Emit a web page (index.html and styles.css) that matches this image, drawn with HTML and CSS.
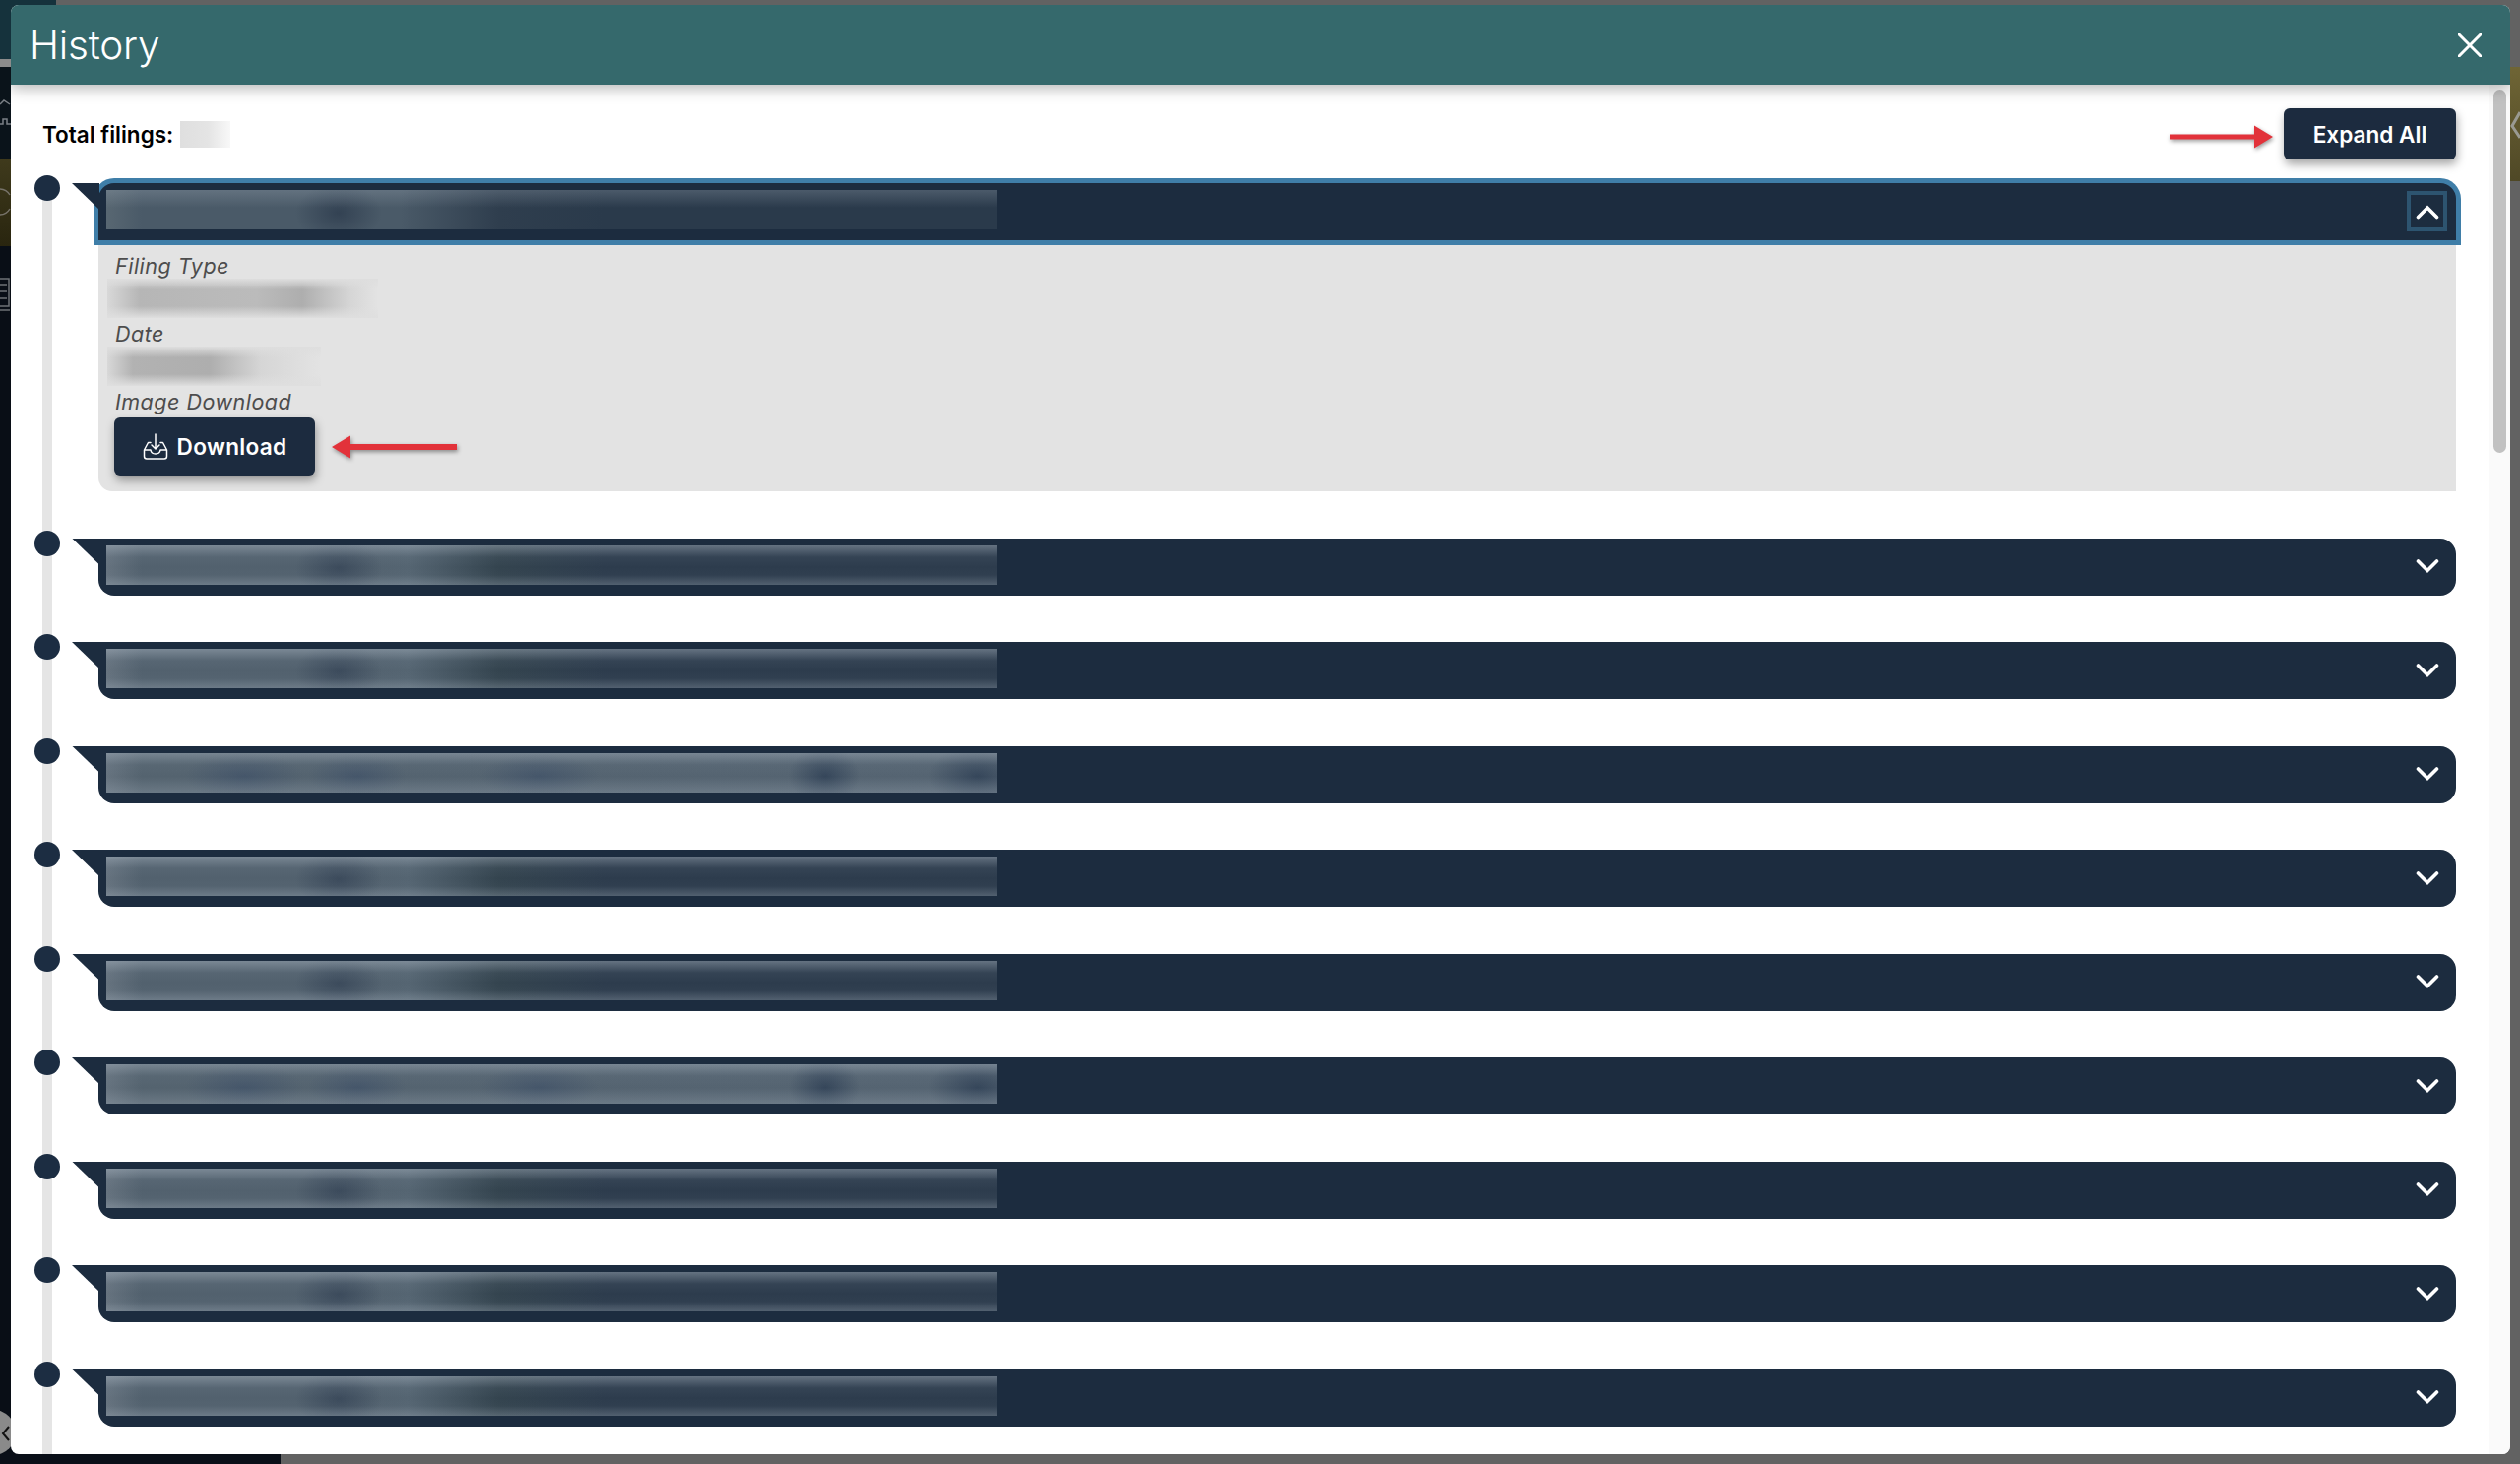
FILE: index.html
```html
<!DOCTYPE html>
<html lang="en">
<head>
<meta charset="utf-8">
<title>History</title>
<link rel="stylesheet" href="styles.css">
</head>
<body>
<div class="backdrop" aria-hidden="true">
  <div class="band band--teal"></div>
  <div class="band band--grey"></div>
  <div class="band band--ink"></div>
  <div class="band band--olive"></div>
  <div class="band band--ink2"></div>
  <div class="bottom-strip"></div>
  <div class="back-circle"></div>
  <div class="right-olive"></div>
  <svg class="deco" viewBox="0 0 2560 1487" width="2560" height="1487" fill="none">
    <path d="M0 106L4 102L10 106M0 126H3V121H7V126H11" stroke="#7b8086" stroke-width="1.500"/>
    <path d="M0 192A12 12 0 0 1 10 198M10 212A12 12 0 0 1 0 218" stroke="#77736a" stroke-width="1.500"/>
    <path d="M0 283H9V311H0M0 289H7M0 296H7M0 303H7M0 315H10" stroke="#6d7176" stroke-width="1.500"/>
    <path d="M2560 114L2552 128L2560 140" stroke="#9a9a92" stroke-width="3"/>
    <path d="M9 1449L3 1456L9 1463" stroke="#111" stroke-width="2"/>
  </svg>
</div>
<main class="modal">
  <header class="modal-head">
    <h1 class="modal-title">History</h1>
    <svg class="close" viewBox="0 0 24 24" width="24" height="24"><path d="M1 1L23 23M23 1L1 23" stroke="#fff" stroke-width="3" stroke-linecap="round" fill="none"/></svg>
  </header>
  <div class="modal-body">
    <div class="content">
      <div class="toolbar">
        <div class="total"><span>Total filings:</span><span class="total-blur"></span></div>
        <div class="toolbar-right">
          <svg class="arrow arrow--right" viewBox="0 0 106 26" width="106" height="26"><path d="M0 10.500H86V1.500L105 13L86 24.500V15.500H0Z" fill="#e2323a"/></svg>
          <button class="btn btn--expand">Expand All</button>
        </div>
      </div>
      <div class="timeline">
        <section class="item">
          <span class="dot"></span>
          <div class="row row--open">
            <div class="redact redact--open"></div>
            <span class="toggle toggle--open"><svg viewBox="0 0 24 16" width="24" height="16"><path d="M2.500 13.500L12 4L21.500 13.500" stroke="#fff" stroke-width="3.600" fill="none" stroke-linecap="round"/></svg></span>
          </div>
          <div class="panel">
            <div class="field">
              <div class="label">Filing Type</div>
              <div class="value value--type"></div>
            </div>
            <div class="field">
              <div class="label">Date</div>
              <div class="value value--date"></div>
            </div>
            <div class="field">
              <div class="label">Image Download</div>
              <div class="download-line">
                <button class="btn btn--download">
                  <svg viewBox="0 0 26 27" width="26" height="27"><path d="M8 9.500H5.500L1.500 17V23.500Q1.500 26 4 26H22Q24.500 26 24.500 23.500V17L20.500 9.500H18M1.500 17H8Q8.500 21 13 21Q17.500 21 18 17H24.500M13 1V15.500M9 12L13 16L17 12" stroke="#fff" stroke-width="1.500" fill="none" stroke-linecap="round" stroke-linejoin="round"/></svg>
                  <span>Download</span>
                </button>
                <svg class="arrow" viewBox="0 0 128 26" width="128" height="26"><path d="M128 10H20V1.500L1 13L20 24.500V16H128Z" fill="#e2323a"/></svg>
              </div>
            </div>
          </div>
        </section>
        <section class="item"><span class="dot"></span><div class="row"><div class="redact redact--a"></div><span class="toggle"><svg viewBox="0 0 24 16" width="24" height="16"><path d="M2.500 3L12 12.500L21.500 3" stroke="#fff" stroke-width="3.600" fill="none" stroke-linecap="round"/></svg></span></div></section>
        <section class="item"><span class="dot"></span><div class="row"><div class="redact redact--a"></div><span class="toggle"><svg viewBox="0 0 24 16" width="24" height="16"><path d="M2.500 3L12 12.500L21.500 3" stroke="#fff" stroke-width="3.600" fill="none" stroke-linecap="round"/></svg></span></div></section>
        <section class="item"><span class="dot"></span><div class="row"><div class="redact redact--b"></div><span class="toggle"><svg viewBox="0 0 24 16" width="24" height="16"><path d="M2.500 3L12 12.500L21.500 3" stroke="#fff" stroke-width="3.600" fill="none" stroke-linecap="round"/></svg></span></div></section>
        <section class="item"><span class="dot"></span><div class="row"><div class="redact redact--a"></div><span class="toggle"><svg viewBox="0 0 24 16" width="24" height="16"><path d="M2.500 3L12 12.500L21.500 3" stroke="#fff" stroke-width="3.600" fill="none" stroke-linecap="round"/></svg></span></div></section>
        <section class="item"><span class="dot"></span><div class="row"><div class="redact redact--a"></div><span class="toggle"><svg viewBox="0 0 24 16" width="24" height="16"><path d="M2.500 3L12 12.500L21.500 3" stroke="#fff" stroke-width="3.600" fill="none" stroke-linecap="round"/></svg></span></div></section>
        <section class="item"><span class="dot"></span><div class="row"><div class="redact redact--b"></div><span class="toggle"><svg viewBox="0 0 24 16" width="24" height="16"><path d="M2.500 3L12 12.500L21.500 3" stroke="#fff" stroke-width="3.600" fill="none" stroke-linecap="round"/></svg></span></div></section>
        <section class="item"><span class="dot"></span><div class="row"><div class="redact redact--a"></div><span class="toggle"><svg viewBox="0 0 24 16" width="24" height="16"><path d="M2.500 3L12 12.500L21.500 3" stroke="#fff" stroke-width="3.600" fill="none" stroke-linecap="round"/></svg></span></div></section>
        <section class="item"><span class="dot"></span><div class="row"><div class="redact redact--a"></div><span class="toggle"><svg viewBox="0 0 24 16" width="24" height="16"><path d="M2.500 3L12 12.500L21.500 3" stroke="#fff" stroke-width="3.600" fill="none" stroke-linecap="round"/></svg></span></div></section>
        <section class="item"><span class="dot"></span><div class="row"><div class="redact redact--a"></div><span class="toggle"><svg viewBox="0 0 24 16" width="24" height="16"><path d="M2.500 3L12 12.500L21.500 3" stroke="#fff" stroke-width="3.600" fill="none" stroke-linecap="round"/></svg></span></div></section>
      </div>
    </div>
    <div class="scrollbar"><div class="thumb"></div></div>
  </div>
</main>
</body>
</html>
```
FILE: styles.css
```css
* { box-sizing: border-box; }
html, body { margin: 0; height: 100%; }
body {
  height: 1487px;
  overflow: hidden;
  position: relative;
  background: #626262;
  font-family: Inter, "Open Sans", "Liberation Sans", sans-serif;
  padding: 5px 10px 10px 11px;
}
.backdrop { position: absolute; left: 0; top: 0; width: 100%; height: 100%; overflow: hidden; }
.deco { position: absolute; left: 0; top: 0; }
.band { position: absolute; left: 0; width: 50px; }
.band--teal { top: 0; height: 60px; background: #15323c; width: 57px; }
.band--grey { top: 60px; height: 8px; background: #8b8b8b; }
.band--ink { top: 68px; height: 93px; background: #0a131a; }
.band--olive { top: 161px; height: 89px; background: linear-gradient(180deg, #3f3a1c, #29250f); }
.band--ink2 { top: 250px; height: 1237px; background: #090e16; }
.bottom-strip { position: absolute; left: 0; bottom: 0; width: 285px; height: 12px; background: #0a0f18; }
.back-circle { position: absolute; left: -30px; top: 1432px; width: 46px; height: 46px; border-radius: 50%; background: #8a8a8a; }
.right-olive { position: absolute; right: 0; top: 68px; width: 10px; height: 116px; background: linear-gradient(180deg, #6f6535, #4f4826); }
.modal {
  position: relative;
  height: 1472px;
  display: flex;
  flex-direction: column;
  background: #fff;
  border-radius: 8px;
  overflow: hidden;
}
.modal-head {
  height: 81px;
  flex: none;
  display: flex;
  align-items: center;
  justify-content: space-between;
  padding: 0 29px 0 19px;
  background: #35696c;
  box-shadow: 0 4px 14px rgba(0,0,0,.28);
  position: relative;
  z-index: 2;
}
.modal-title { margin: 0; color: #fff; font-size: 40.500px; font-weight: 300; letter-spacing: -.2px; }
.modal-body { flex: 1; display: flex; min-height: 0; }
.content { flex: 1; min-width: 0; padding-right: 33px; display: flex; flex-direction: column; }
.toolbar { display: flex; justify-content: space-between; align-items: center; height: 52px; margin-top: 24px; padding-left: 32px; flex: none; }
.total { display: flex; align-items: center; gap: 7px; color: #000; font-size: 22.500px; font-weight: 600; }
.total-blur { width: 51px; height: 27px; background: linear-gradient(90deg, #dfdfdf, #e4e4e4 55%, #f8f8f8); }
.toolbar-right { display: flex; align-items: center; gap: 10px; }
.arrow { filter: drop-shadow(1px 2px 2px rgba(0,0,0,.4)); flex: none; }
.arrow--right { margin-top: 6px; }
.btn {
  display: inline-flex;
  align-items: center;
  justify-content: center;
  border: 0;
  background: #1c2b3f;
  color: #fff;
  font: 600 22.600px Inter, "Open Sans", sans-serif;
  border-radius: 6px;
  box-shadow: 1px 5px 10px rgba(0,0,0,.35);
}
.btn--expand { width: 175px; height: 52px; }
.btn--download { width: 204px; height: 59px; gap: 9px; letter-spacing: .3px; }
.timeline { position: relative; flex: 1; display: flex; flex-direction: column; gap: 47.500px; margin-top: 24px; }
.timeline::before { content: ""; position: absolute; left: 32px; top: 0; bottom: 0; width: 10px; background: #e5e5e5; }
.item { position: relative; margin-left: 89px; }
.dot { position: absolute; left: -65px; top: -8px; width: 26px; height: 26px; border-radius: 50%; background: #1c2d42; }
.row {
  position: relative;
  height: 58px;
  padding: 7px 0 0 8px;
  background: #1c2c3f;
  border-radius: 0 16px 16px 16px;
}
.row::before {
  content: "";
  position: absolute;
  left: -27px;
  top: 0;
  width: 28px;
  height: 27px;
  background: #1c2c3f;
  clip-path: polygon(0 0, 100% 0, 100% 100%);
}
.row--open { border-radius: 16px 16px 0 0; box-shadow: 0 0 0 5px #3f7ea8; z-index: 1; }
.redact { width: 905px; height: 40px; }
.redact--a {
  background:
    linear-gradient(180deg, rgba(178,190,202,.42), rgba(150,165,180,.07) 30%, rgba(150,165,180,0) 55%, rgba(150,165,180,.03) 75%, rgba(178,190,202,.28)),
    radial-gradient(ellipse 44px 30px at 236px 58%, #3c4b5c 0, rgba(60,75,92,0) 100%),
    linear-gradient(90deg, #66737f 0, #52616e 4%, #52616e 28%, #556572 34%, #34444f 44%, #2d3c4d 56%, #2d3c4d 100%);
}
.redact--b {
  background:
    linear-gradient(180deg, rgba(178,190,202,.38), rgba(150,165,180,.06) 30%, rgba(150,165,180,0) 60%, rgba(178,190,202,.24)),
    radial-gradient(ellipse 36px 30px at 730px 58%, #35465a 0, rgba(53,70,90,0) 100%),
    radial-gradient(ellipse 50px 30px at 885px 58%, #35465a 0, rgba(53,70,90,0) 100%),
    radial-gradient(ellipse 60px 24px at 140px 58%, #45566a 0, rgba(69,86,106,0) 100%),
    radial-gradient(ellipse 50px 22px at 255px 58%, #45566a 0, rgba(69,86,106,0) 100%),
    radial-gradient(ellipse 60px 22px at 440px 58%, #45566a 0, rgba(69,86,106,0) 100%),
    linear-gradient(90deg, #66737f 0, #54636f 4%, #556472 100%);
}
.redact--open {
  background:
    linear-gradient(180deg, rgba(170,182,194,.26), rgba(150,165,180,0) 45%),
    radial-gradient(ellipse 44px 30px at 236px 58%, #334253 0, rgba(60,75,92,0) 100%),
    linear-gradient(90deg, #586772 0, #4a5a68 4%, #4a5a68 33%, #2f3e4e 44%, #2a3a4b 56%, #2a3a4b 100%);
}
.toggle {
  position: absolute;
  right: 9px;
  top: 8px;
  width: 41px;
  height: 41px;
  display: flex;
  align-items: center;
  justify-content: center;
}
.toggle--open { border: 4px solid #2d5470; }
.panel {
  height: 255px;
  background: #e3e3e3;
  border-radius: 0 0 0 14px;
  padding: 14px 0 0 17px;
}
.field { margin-bottom: 4px; }
.label { height: 25px; line-height: 25px; font-size: 21.500px; letter-spacing: .5px; font-style: italic; color: #4d4d4d; font-weight: 400; }
.value { margin-left: -8px; height: 40px; }
.value--type {
  width: 275px;
  background:
    linear-gradient(180deg, #dedede, rgba(227,227,227,0) 28%, rgba(227,227,227,0) 70%, #dfdfdf),
    linear-gradient(90deg, #d8d8d8, #b6b6b6 12%, #bbbbbb 55%, #aeaeae 72%, #d6d6d6 90%, #e3e3e3 100%);
}
.value--date {
  width: 217px;
  background:
    linear-gradient(180deg, #dedede, rgba(227,227,227,0) 28%, rgba(227,227,227,0) 70%, #dfdfdf),
    linear-gradient(90deg, #d8d8d8, #b2b2b2 12%, #aeaeae 48%, #d6d6d6 72%, #e3e3e3 100%);
}
.download-line { display: flex; align-items: center; gap: 16px; margin-top: 3px; margin-left: -1px; }
.close { display: block; }
.scrollbar { flex: none; width: 22px; background: #fafafa; border-left: 1px solid #e6e6e6; padding: 5px 4px 0 4px; }
.thumb { width: 13px; height: 369px; border-radius: 7px; background: #c1c1c1; }
```
